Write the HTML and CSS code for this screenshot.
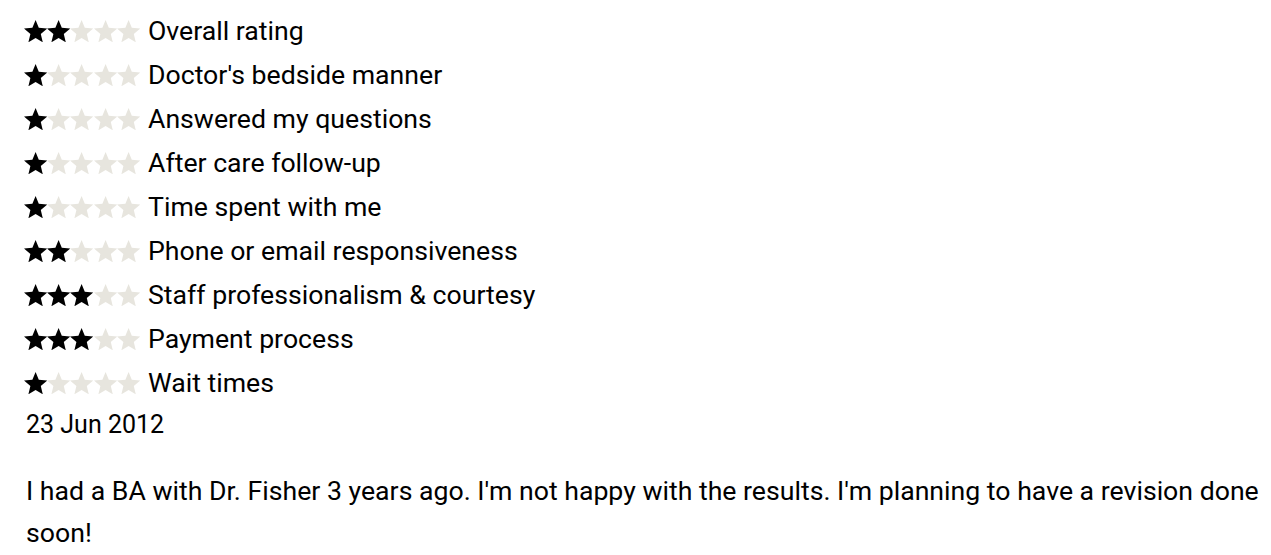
FILE: index.html
```html
<!DOCTYPE html>
<html>
<head>
<meta charset="utf-8">
<link rel="stylesheet" href="styles.css">
</head>
<body>
<svg class="defs" width="0" height="0" aria-hidden="true">
  <defs>
    <polygon id="star" points="12,0.6 15.2,8.4 23.6,9.1 17.2,14.6 19.2,22.9 12,18.5 4.8,22.9 6.8,14.6 0.4,9.1 8.8,8.4"/>
  </defs>
</svg>
<div class="review">
  <ul class="ratings">
    <li class="rating"><span class="stars"><svg class="star on" viewBox="0.4 0.6 23.2 22.3"><use href="#star"/></svg><svg class="star on" viewBox="0.4 0.6 23.2 22.3"><use href="#star"/></svg><svg class="star off" viewBox="0.4 0.6 23.2 22.3"><use href="#star"/></svg><svg class="star off" viewBox="0.4 0.6 23.2 22.3"><use href="#star"/></svg><svg class="star off" viewBox="0.4 0.6 23.2 22.3"><use href="#star"/></svg></span><span class="label">Overall rating</span></li>
    <li class="rating"><span class="stars"><svg class="star on" viewBox="0.4 0.6 23.2 22.3"><use href="#star"/></svg><svg class="star off" viewBox="0.4 0.6 23.2 22.3"><use href="#star"/></svg><svg class="star off" viewBox="0.4 0.6 23.2 22.3"><use href="#star"/></svg><svg class="star off" viewBox="0.4 0.6 23.2 22.3"><use href="#star"/></svg><svg class="star off" viewBox="0.4 0.6 23.2 22.3"><use href="#star"/></svg></span><span class="label">Doctor's bedside manner</span></li>
    <li class="rating"><span class="stars"><svg class="star on" viewBox="0.4 0.6 23.2 22.3"><use href="#star"/></svg><svg class="star off" viewBox="0.4 0.6 23.2 22.3"><use href="#star"/></svg><svg class="star off" viewBox="0.4 0.6 23.2 22.3"><use href="#star"/></svg><svg class="star off" viewBox="0.4 0.6 23.2 22.3"><use href="#star"/></svg><svg class="star off" viewBox="0.4 0.6 23.2 22.3"><use href="#star"/></svg></span><span class="label">Answered my questions</span></li>
    <li class="rating"><span class="stars"><svg class="star on" viewBox="0.4 0.6 23.2 22.3"><use href="#star"/></svg><svg class="star off" viewBox="0.4 0.6 23.2 22.3"><use href="#star"/></svg><svg class="star off" viewBox="0.4 0.6 23.2 22.3"><use href="#star"/></svg><svg class="star off" viewBox="0.4 0.6 23.2 22.3"><use href="#star"/></svg><svg class="star off" viewBox="0.4 0.6 23.2 22.3"><use href="#star"/></svg></span><span class="label">After care follow-up</span></li>
    <li class="rating"><span class="stars"><svg class="star on" viewBox="0.4 0.6 23.2 22.3"><use href="#star"/></svg><svg class="star off" viewBox="0.4 0.6 23.2 22.3"><use href="#star"/></svg><svg class="star off" viewBox="0.4 0.6 23.2 22.3"><use href="#star"/></svg><svg class="star off" viewBox="0.4 0.6 23.2 22.3"><use href="#star"/></svg><svg class="star off" viewBox="0.4 0.6 23.2 22.3"><use href="#star"/></svg></span><span class="label">Time spent with me</span></li>
    <li class="rating"><span class="stars"><svg class="star on" viewBox="0.4 0.6 23.2 22.3"><use href="#star"/></svg><svg class="star on" viewBox="0.4 0.6 23.2 22.3"><use href="#star"/></svg><svg class="star off" viewBox="0.4 0.6 23.2 22.3"><use href="#star"/></svg><svg class="star off" viewBox="0.4 0.6 23.2 22.3"><use href="#star"/></svg><svg class="star off" viewBox="0.4 0.6 23.2 22.3"><use href="#star"/></svg></span><span class="label">Phone or email responsiveness</span></li>
    <li class="rating"><span class="stars"><svg class="star on" viewBox="0.4 0.6 23.2 22.3"><use href="#star"/></svg><svg class="star on" viewBox="0.4 0.6 23.2 22.3"><use href="#star"/></svg><svg class="star on" viewBox="0.4 0.6 23.2 22.3"><use href="#star"/></svg><svg class="star off" viewBox="0.4 0.6 23.2 22.3"><use href="#star"/></svg><svg class="star off" viewBox="0.4 0.6 23.2 22.3"><use href="#star"/></svg></span><span class="label">Staff professionalism &amp; courtesy</span></li>
    <li class="rating"><span class="stars"><svg class="star on" viewBox="0.4 0.6 23.2 22.3"><use href="#star"/></svg><svg class="star on" viewBox="0.4 0.6 23.2 22.3"><use href="#star"/></svg><svg class="star on" viewBox="0.4 0.6 23.2 22.3"><use href="#star"/></svg><svg class="star off" viewBox="0.4 0.6 23.2 22.3"><use href="#star"/></svg><svg class="star off" viewBox="0.4 0.6 23.2 22.3"><use href="#star"/></svg></span><span class="label">Payment process</span></li>
    <li class="rating"><span class="stars"><svg class="star on" viewBox="0.4 0.6 23.2 22.3"><use href="#star"/></svg><svg class="star off" viewBox="0.4 0.6 23.2 22.3"><use href="#star"/></svg><svg class="star off" viewBox="0.4 0.6 23.2 22.3"><use href="#star"/></svg><svg class="star off" viewBox="0.4 0.6 23.2 22.3"><use href="#star"/></svg><svg class="star off" viewBox="0.4 0.6 23.2 22.3"><use href="#star"/></svg></span><span class="label">Wait times</span></li>
  </ul>
  <div class="date">23 Jun 2012</div>
  <p class="text">I had a BA with Dr. Fisher 3 years ago. I'm not happy with the results. I'm planning to have a revision done soon!</p>
</div>
</body>
</html>
```

FILE: styles.css
```css
html, body {
  margin: 0;
  padding: 0;
  background: #ffffff;
}
body {
  font-family: Roboto, "Liberation Sans", sans-serif;
  color: #000000;
}
.defs {
  position: absolute;
  width: 0;
  height: 0;
  overflow: hidden;
}
.review {
  padding: 9px 8px 0 26px;
}
.ratings {
  list-style: none;
  margin: 0;
  padding: 0;
}
.rating {
  display: flex;
  align-items: center;
  height: 44px;
  font-size: 26.67px;
}
.stars {
  display: flex;
  width: 124px;
  margin-left: -2px;
}
.star {
  width: 23.2px;
  height: 22.3px;
  display: block;
  flex: none;
}
.star.on { fill: #000000; }
.star.off { fill: #e7e5de; }
.label {
  line-height: 1;
}
.date {
  font-size: 25px;
  line-height: 40px;
}
.text {
  margin: 25px 0 0;
  font-size: 26.67px;
  line-height: 42px;
}
```
